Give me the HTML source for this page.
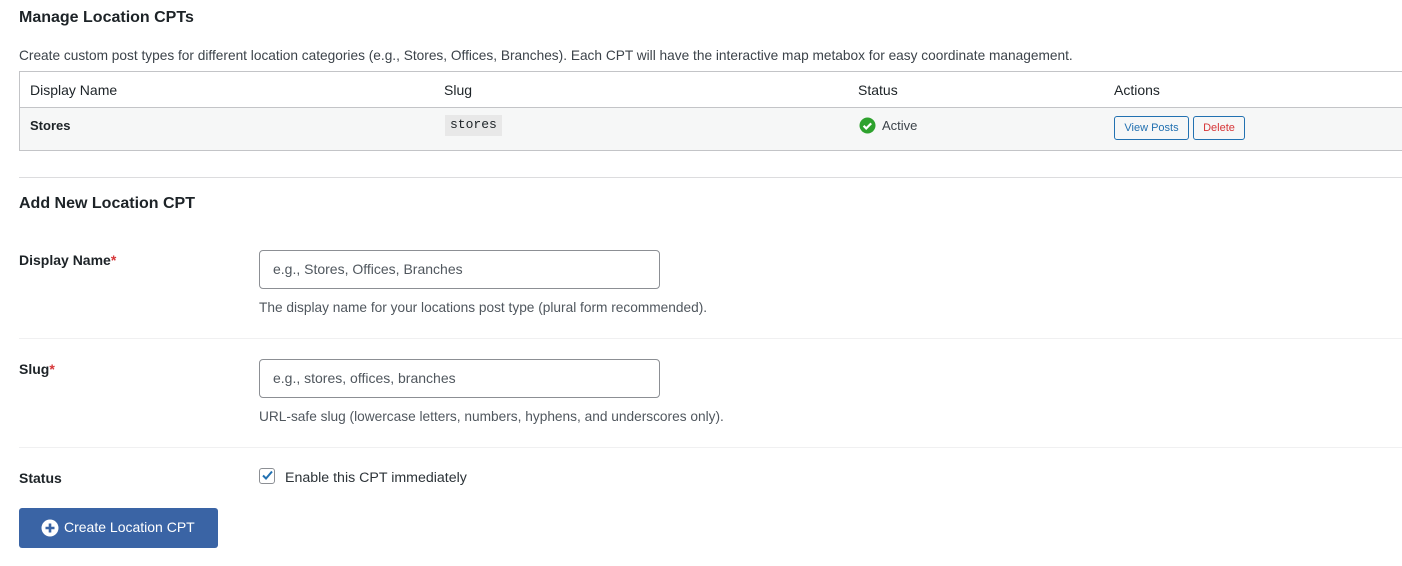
<!DOCTYPE html>
<html><head><style>
body{margin:0;width:1402px;height:566px;background:#fff;font-family:"Liberation Sans",sans-serif;color:#1d2327;position:relative;overflow:hidden}
.a{position:absolute;white-space:nowrap}
h2{margin:0;font-size:16px;font-weight:600}
.inp{position:absolute;left:259px;width:401px;height:37px;border:1px solid #8c8f94;border-radius:4px;box-sizing:border-box;font-size:14px;color:#50575e;padding:10px 0 0 13px}
.lbl{font-size:14px;font-weight:bold}
.desc{font-size:13.7px;color:#50575e}
.hr{position:absolute;left:19px;right:0;height:1px;background:#dcdcde}
.btn{position:absolute;top:116px;height:24px;border:1px solid #2271b1;border-radius:3px;font-size:11px;box-sizing:border-box;padding-top:5px;text-align:center;background:#f6f7f7}
</style></head><body>
<h2 class="a" style="left:19px;top:9px">Manage Location CPTs</h2>
<div class="a desc" style="left:19px;top:48px;color:#3c434a">Create custom post types for different location categories (e.g., Stores, Offices, Branches). Each CPT will have the interactive map metabox for easy coordinate management.</div>
<div class="a" style="left:19px;top:71px;width:1400px;height:80px;border:1px solid #c3c4c7;box-sizing:border-box"></div>
<div class="a" style="left:20px;top:107px;width:1382px;height:42px;background:#f6f7f7;border-top:1px solid #c3c4c7"></div>
<div class="a" style="left:30px;top:82px;font-size:14px">Display Name</div>
<div class="a" style="left:444px;top:82px;font-size:14px">Slug</div>
<div class="a" style="left:858px;top:82px;font-size:14px">Status</div>
<div class="a" style="left:1114px;top:82px;font-size:14px">Actions</div>
<div class="a" style="left:30px;top:118px;font-size:13px;font-weight:600">Stores</div>
<div class="a" style="left:445px;top:115px;height:21px;width:57px;background:#e8e8e8;font-family:'Liberation Mono',monospace;font-size:13px;padding:2px 0 0 5px;box-sizing:border-box">stores</div>
<svg class="a" style="left:859px;top:117px" width="17" height="17" viewBox="0 0 17 17"><circle cx="8.5" cy="8.5" r="8" fill="#2ea22e"/><path d="M4.6 8.8l2.6 2.6 5-5" stroke="#fff" stroke-width="2.2" fill="none"/></svg>
<div class="a" style="left:882px;top:118px;font-size:13px;color:#3c434a">Active</div>
<div class="btn" style="left:1114px;width:75px;color:#2271b1">View Posts</div>
<div class="btn" style="left:1193px;width:52px;color:#d63638">Delete</div>
<div class="hr" style="top:177px"></div>
<h2 class="a" style="left:19px;top:195px">Add New Location CPT</h2>
<div class="a lbl" style="left:19px;top:252px">Display Name<span style="color:#d63638">*</span></div>
<div class="inp" style="top:250px;height:39px">e.g., Stores, Offices, Branches</div>
<div class="a desc" style="left:259px;top:300px">The display name for your locations post type (plural form recommended).</div>
<div class="hr" style="top:338px;background:#f0f0f1"></div>
<div class="a lbl" style="left:19px;top:361px">Slug<span style="color:#d63638">*</span></div>
<div class="inp" style="top:359px;height:39px">e.g., stores, offices, branches</div>
<div class="a desc" style="left:259px;top:409px">URL-safe slug (lowercase letters, numbers, hyphens, and underscores only).</div>
<div class="hr" style="top:447px;background:#f0f0f1"></div>
<div class="a lbl" style="left:19px;top:470px">Status</div>
<div class="a" style="left:259px;top:468px;width:16px;height:16px;border:1px solid #8c8f94;border-radius:3px;box-sizing:border-box"></div>
<svg class="a" style="left:260px;top:468px" width="15" height="15" viewBox="0 0 15 15"><path d="M3 7.5l3 3 6-7" stroke="#2271b1" stroke-width="2" fill="none"/></svg>
<div class="a" style="left:285px;top:470px;font-size:14.2px;color:#2c3338">Enable this CPT immediately</div>
<div class="a" style="left:19px;top:508px;width:199px;height:40px;background:#3a64a5;border-radius:3px"></div>
<svg class="a" style="left:41px;top:519px" width="18" height="18" viewBox="0 0 18 18"><circle cx="9" cy="9" r="8.5" fill="#fff"/><path d="M9 4.5v9M4.5 9h9" stroke="#3a64a5" stroke-width="2.6"/></svg>
<div class="a" style="left:64px;top:519px;font-size:14px;color:#fff">Create Location CPT</div>
</body></html>
